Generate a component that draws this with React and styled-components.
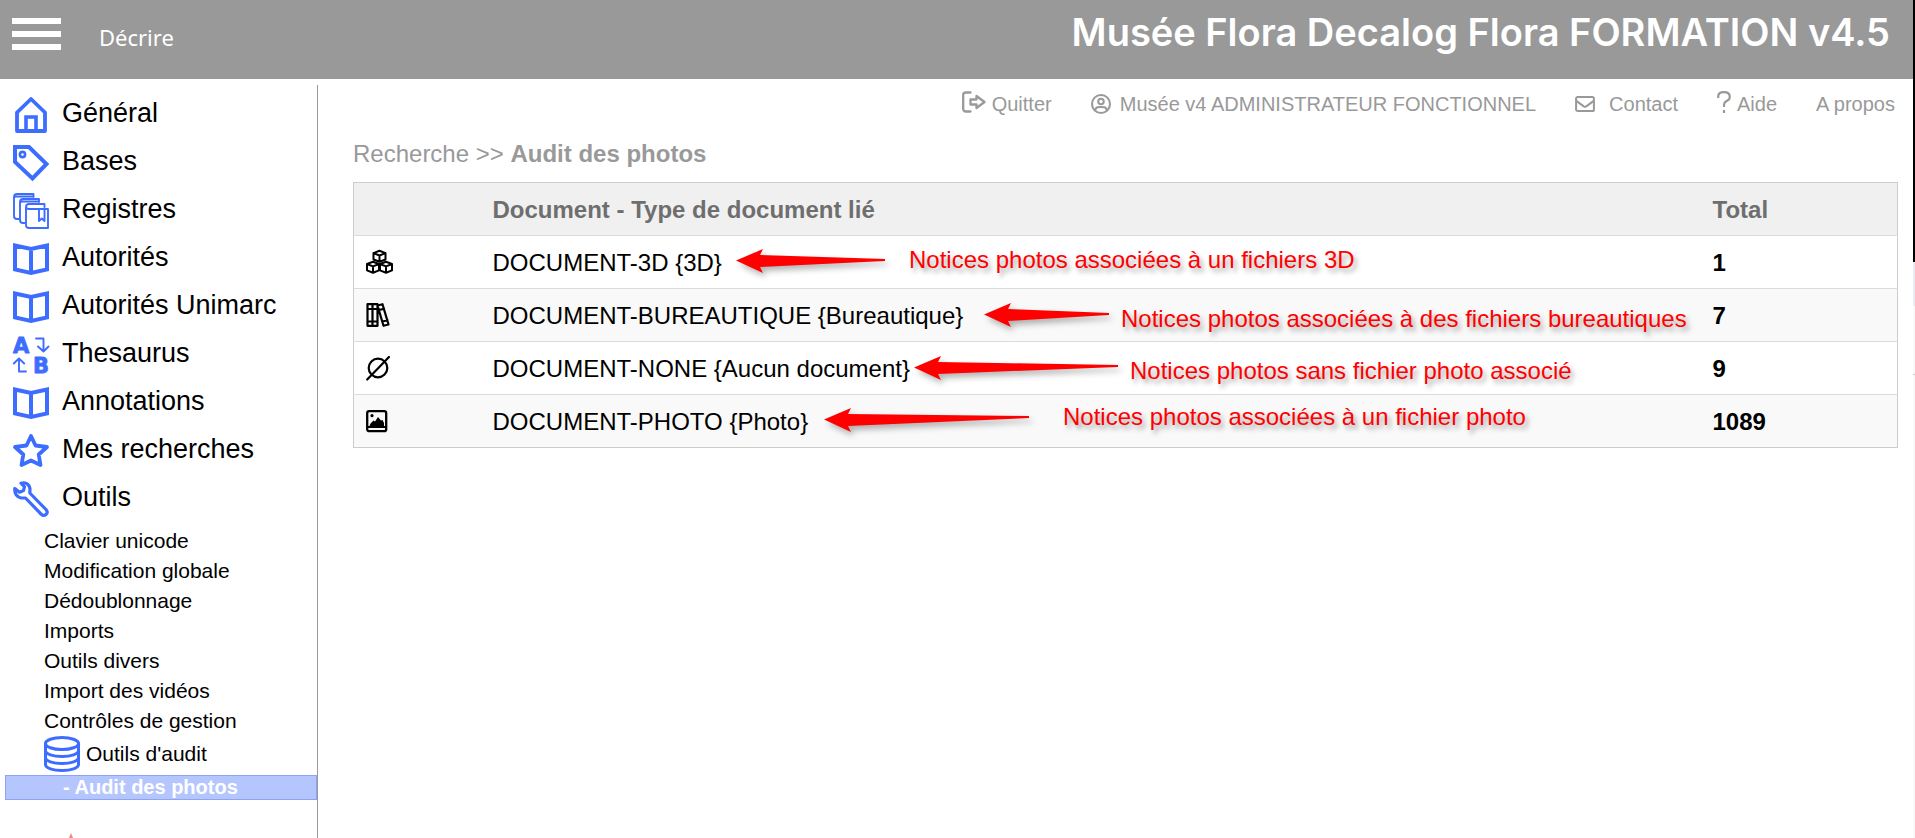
import React from "react";
import styled, { createGlobalStyle } from "styled-components";

const Global = createGlobalStyle`
  * { box-sizing: border-box; }
  body { margin: 0; background: #fff; font-family: "Liberation Sans", Arial, sans-serif; color: #000; }
  a { color: inherit; text-decoration: none; }
  ul { list-style: none; margin: 0; padding: 0; }
`;

const BLUE = "#3d6dff";

const Page = styled.div`
  display: flex;
  height: 100vh;
  overflow: hidden;
`;
const Shell = styled.div`
  flex: 1;
  min-width: 0;
  display: flex;
  flex-direction: column;
`;
const EdgeStrip = styled.div`
  width: 2px;
  display: flex;
  flex-direction: column;
  background: #f9f9f9;
`;
const EdgePart = styled.div`
  height: ${(p) => p.$h}px;
  background: ${(p) => p.$color};
`;
const Header = styled.header`
  display: flex;
  align-items: flex-start;
  height: 79px;
  padding: 0 23px 0 12px;
  background: #999;
  color: #fff;
`;
const MenuButton = styled.button`
  display: flex;
  flex-direction: column;
  gap: 7px;
  width: 49px;
  margin-top: 18px;
  padding: 0;
  border: 0;
  background: none;
`;
const MenuBar = styled.span`
  height: 6px;
  width: 100%;
  background: #fff;
`;
const Section = styled.a`
  margin: 20px 0 0 38px;
  font-family: "Noto Sans", sans-serif;
  font-size: 22px;
  line-height: 34px;
`;
const Title = styled.h1`
  margin: 0 0 0 auto;
  font-family: Inter, sans-serif;
  font-size: 38px;
  font-weight: 600;
  line-height: 64px;
`;
const Columns = styled.div`
  flex: 1;
  min-height: 0;
  display: flex;
`;
const Sidebar = styled.nav`
  width: 318px;
  flex: none;
  margin-top: 6px;
  padding: 2px 0 0 5px;
  border-right: 1px solid #999;
  overflow: hidden;
`;
const NavLink = styled.a`
  display: flex;
  align-items: center;
  gap: 13px;
  height: 48px;
  padding: 4px 0 0 8px;
  font-size: 27px;
  svg { flex: none; margin-top: 4px; }
`;
const SubList = styled.ul`
  padding: 7px 0 3px 39px;
`;
const SubLink = styled.a`
  display: flex;
  align-items: center;
  gap: 6px;
  height: ${(p) => (p.$tall ? 36 : 30)}px;
  font-size: 21px;
`;
const Current = styled.a`
  display: block;
  height: 25px;
  padding-left: 57px;
  border: 1px solid #8aa4fb;
  background: #b5c6ff;
  color: #fff;
  font-size: 20px;
  font-weight: 700;
  line-height: 23px;
`;
const Peek = styled.div`
  padding: 33px 0 0 61px;
  line-height: 0;
`;
const Main = styled.main`
  flex: 1;
  min-width: 0;
  padding: 0 15px 0 35px;
`;
const UserBar = styled.nav`
  display: flex;
  justify-content: flex-end;
  gap: 39px;
  height: 50px;
  padding-right: 3px;
  color: #999;
  font-size: 20px;
`;
const UserLink = styled.a`
  display: flex;
  align-items: center;
  gap: ${(p) => p.$gap || 6}px;
  white-space: nowrap;
  svg { margin-bottom: ${(p) => (p.$raised ? 4 : 0)}px; }
`;
const Crumbs = styled.h2`
  margin: 10px 0 14px;
  color: #999;
  font-size: 24px;
  font-weight: 400;
  line-height: 29px;
`;
const Audit = styled.div`
  position: relative;
`;
const Table = styled.table`
  width: 100%;
  border-collapse: collapse;
  table-layout: fixed;
  border: 1px solid #ccc;
  font-size: 24px;
`;
const Head = styled.th`
  width: ${(p) => p.$w || "auto"};
  height: 53px;
  padding: 2px 0 0;
  background: #f0f0f0;
  color: #6e6e6e;
  text-align: left;
`;
const Row = styled.tr`
  border-top: 1px solid #dbdbdb;
  background: ${(p) => (p.$odd ? "#f9f9f9" : "#fff")};
`;
const Cell = styled.td`
  height: 53px;
  padding: 2px 0 0;
  font-weight: ${(p) => (p.$bold ? 700 : 400)};
  white-space: nowrap;
`;
const IconCell = styled.td`
  padding: 0 0 0 12px;
  svg { display: block; }
`;
const Arrow = styled.svg`
  position: absolute;
  left: ${(p) => p.$x}px;
  top: ${(p) => p.$y}px;
  overflow: visible;
  filter: drop-shadow(3px 4px 3px rgba(0, 0, 0, 0.3));
`;
const Note = styled.span`
  position: absolute;
  left: ${(p) => p.$x}px;
  top: ${(p) => p.$y}px;
  color: #f00;
  font-size: 24px;
  line-height: 28px;
  white-space: nowrap;
  text-shadow: 3px 4px 5px rgba(0, 0, 0, 0.35);
`;

const Svg = ({ size = 36, box = 36, sw = 4, color = BLUE, children }) => (
  <svg width={size} height={size} viewBox={`0 0 ${box} ${box}`} fill="none" stroke={color} overflow="visible"
    strokeWidth={sw} strokeLinejoin="round" strokeLinecap="round" aria-hidden="true">{children}</svg>
);

const icons = {
  home: <Svg><path d="M4 15.500 18 2 32 15.500V34H4Z" strokeWidth="3.800" /><path d="M13 34V20h10v14" strokeLinejoin="miter" strokeLinecap="butt" strokeWidth="3.600" /></Svg>,
  tag: <Svg><path d="M2 2H16L33.500 19 19.500 33.500 2 17Z" strokeLinejoin="miter" /><circle cx="9.500" cy="9.500" r="2.600" strokeWidth="2.600" /></Svg>,
  registers: <Svg sw={1.900}>
    <path d="M20.500 4V1H4C2 1 1 2 1 4V23c0 2 1 3 3 3H6M1 5C1 4 2 3.500 3.500 3.500H20" />
    <path d="M26 9V6H10C8 6 7 7 7 9V27c0 2 1 3 3 3H12M7 10C7 9 8 8.500 9.500 8.500H26" />
    <path d="M31.500 14V11H16C14 11 13 12 13 14V32c0 2 1 3 3 3H35V16H16C14.500 16 13 15 13 13.500" />
    <path d="M26 16V28l2.800-2.500L31.500 28V16" />
  </Svg>,
  book: <Svg><path d="M2 4.500 18 8 34 4.500V28.500L18 32 2 28.500ZM18 8V32" strokeLinejoin="miter" /></Svg>,
  ab: <Svg sw={1.900}>
    <g fill={BLUE} strokeWidth="0.800" fontFamily="DejaVu Sans" fontWeight="700" fontSize="21"><text x="0" y="16">A</text><text x="20" y="35.500">B</text></g>
    <path d="M23 1.500H30.500V13.500M25 9.500 30.500 14.500 35.500 9.500" /><path d="M13 34.500H6V22.500M.8 26.500 6 21.500 11.200 26.500" />
  </Svg>,
  star: <Svg><path d="M18 3 22.500 12.500 34 14 25.700 21.500 27.500 32 18 27.500 8.500 32 10.300 21.500 2 14 13.500 12.500Z" strokeWidth="3.800" /></Svg>,
  wrench: <Svg><path d="M8 2.200C12 .8 16.500 3 17 8L16.800 12 33 28.500C34.600 30.500 34.200 32.500 33 33.500 31.500 34.800 29.500 34.500 28 33L12.500 17H8C4 16.500 1.300 12.500 1.800 7.500L6.500 11.200 10.500 9.500 11.500 5.800Z" strokeWidth="3.200" /></Svg>,
  db: <Svg sw={3}><ellipse cx="18" cy="7.500" rx="16.500" ry="6" /><path d="M1.500 7.500V28.500C1.500 32 9 34.500 18 34.500S34.500 32 34.500 28.500V7.500M1.500 14.500C1.500 18 9 20.500 18 20.500S34.500 18 34.500 14.500M1.500 21.500C1.500 25 9 27.500 18 27.500S34.500 25 34.500 21.500" /></Svg>,
};

const black = { size: 28, box: 28, color: "#000" };
const docIcons = {
  cubes: <Svg {...black} sw={2}>
    {[[13.5, 8.3], [7, 19.2], [20, 19.2]].map(([x, y]) => (
      <path key={x} d={`M${x} ${y - 5.5} ${x + 6} ${y - 3.2}V${y + 3.2}L${x} ${y + 5.5} ${x - 6} ${y + 3.2}V${y - 3.2}ZM${x - 6} ${y - 3.2} ${x} ${y - 0.8} ${x + 6} ${y - 3.2}M${x} ${y - 0.8}V${y + 5.5}`} />
    ))}
  </Svg>,
  books: <Svg {...black} sw={2.200}><path d="M1.500 3.200H11.500V24.800H1.500ZM6.500 3.200V24.800M1.500 8H11.500M1.500 20.500H11.500M11.500 4.500 16.500 3.200 22.500 23.500 17.500 24.800 11.500 4.500M13 9 18 7.700M16.500 20.500 21.500 19.200" /></Svg>,
  none: <Svg {...black} sw={2.200}><circle cx="12" cy="14" r="9.300" /><path d="M1.200 25.500 23 3" /></Svg>,
  photo: <Svg {...black} sw={2.300}><rect x="1.200" y="4.200" width="19" height="20" rx="2" /><path d="M2 20H20" strokeWidth="1.800" /><path d="M3.500 19 4.500 16.500 7.500 13.500 9 14.500 12 10 15 13.500 16.500 13 18 16V19Z" fill="#000" stroke="none" /><circle cx="6" cy="8.700" r="1.600" fill="#000" stroke="none" /></Svg>,
};

const gray = { size: 24, box: 24, color: "#999" };
const userLinks = [
  { label: "Quitter", icon: <Svg {...gray} sw={2.300}><path d="M8.500 2.500H4C2 2.500 1.200 3.500 1.200 5V18.500C1.200 20 2 21.500 4 21.500H8.500M8.500 9.500H14.500V6L22.500 12 14.500 18V14.500H8.500Z" /></Svg>, gap: 6, raised: true },
  { label: "Musée v4 ADMINISTRATEUR FONCTIONNEL", icon: <Svg {...gray} size={20} sw={2.500}><circle cx="12" cy="12" r="10.800" /><circle cx="12" cy="9" r="3.300" /><path d="M5 19.500C6 15.500 8.500 15.500 12 15.500S18 15.500 19 19.500" /></Svg>, gap: 9 },
  { label: "Contact", icon: <Svg {...gray} size={20} sw={2.400}><rect x="1.300" y="3.500" width="21.400" height="17" rx="2" /><path d="M2 8.500 10.500 14.800Q12 15.800 13.500 14.800L22 8.500" /></Svg>, gap: 14 },
  { label: "Aide", icon: <svg width="14" height="22" viewBox="0 0 14 22" fill="none" stroke="#999" strokeWidth="2.200" aria-hidden="true"><path d="M1.200 7V5.500C1.200 2.500 3.500 1.200 7 1.200S12.800 3 12.800 6 11 9 9 10.500 7 12.500 7 16M7 19V22" /></svg>, gap: 6, raised: true },
  { label: "A propos" },
];

const nav = [
  ["Général", "home"], ["Bases", "tag"], ["Registres", "registers"], ["Autorités", "book"],
  ["Autorités Unimarc", "book"], ["Thesaurus", "ab"], ["Annotations", "book"],
  ["Mes recherches", "star"], ["Outils", "wrench"],
];
const tools = ["Clavier unicode", "Modification globale", "Dédoublonnage", "Imports", "Outils divers", "Import des vidéos", "Contrôles de gestion"];
const rows = [
  ["cubes", "DOCUMENT-3D {3D}", "1"],
  ["books", "DOCUMENT-BUREAUTIQUE {Bureautique}", "7"],
  ["none", "DOCUMENT-NONE {Aucun document}", "9"],
  ["photo", "DOCUMENT-PHOTO {Photo}", "1089"],
];
const notes = [
  { text: "Notices photos associées à un fichiers 3D", ax: 383, ay: 64, len: 149, tail: 13, x: 556, y: 64 },
  { text: "Notices photos associées à des fichiers bureautiques", ax: 631, ay: 118, len: 125, tail: 13, x: 768, y: 123 },
  { text: "Notices photos sans fichier photo associé", ax: 561, ay: 171, len: 204, tail: 12, x: 777, y: 175 },
  { text: "Notices photos associées à un fichier photo", ax: 471, ay: 223, len: 205, tail: 11, x: 710, y: 221 },
];

export default function App() {
  return (
    <Page>
      <Global />
      <Shell>
        <Header>
          <MenuButton aria-label="Menu"><MenuBar /><MenuBar /><MenuBar /></MenuButton>
          <Section href="#decrire">Décrire</Section>
          <Title>Musée Flora Decalog Flora FORMATION v4.5</Title>
        </Header>
        <Columns>
          <Sidebar>
            <ul>
              {nav.map(([label, icon]) => (
                <li key={label}><NavLink href="#nav">{icons[icon]}{label}</NavLink></li>
              ))}
            </ul>
            <SubList>
              {tools.map((t) => <li key={t}><SubLink href="#tool">{t}</SubLink></li>)}
              <li><SubLink href="#audit" $tall>{icons.db}Outils d'audit</SubLink></li>
            </SubList>
            <Current href="#photos" aria-current="page">- Audit des photos</Current>
            <Peek><svg width="10" height="12" viewBox="0 0 10 12" aria-hidden="true"><path d="M5 0 10 12H0Z" fill="#f28b82" /></svg></Peek>
          </Sidebar>
          <Main>
            <UserBar>
              {userLinks.map((l) => (
                <UserLink key={l.label} href="#user" $gap={l.gap} $raised={l.raised}>{l.icon}{l.label}</UserLink>
              ))}
            </UserBar>
            <Crumbs>Recherche &gt;&gt; <b>Audit des photos</b></Crumbs>
            <Audit>
              <Table>
                <thead>
                  <tr><Head $w="139px" aria-label="Type" /><Head>Document - Type de document lié</Head><Head $w="185px">Total</Head></tr>
                </thead>
                <tbody>
                  {rows.map(([icon, name, total], i) => (
                    <Row key={name} $odd={i % 2 === 1}>
                      <IconCell>{docIcons[icon]}</IconCell><Cell>{name}</Cell><Cell $bold>{total}</Cell>
                    </Row>
                  ))}
                </tbody>
              </Table>
              {notes.map((n) => (
                <React.Fragment key={n.text}>
                  <Arrow $x={n.ax} $y={n.ay} width={n.len} height="28" aria-hidden="true">
                    <path d={`M0 14.500 27 3 24 9 ${n.len} ${n.tail}V${n.tail + 2}L24 21 27 27Z`} fill="#f00" />
                  </Arrow>
                  <Note $x={n.x} $y={n.y}>{n.text}</Note>
                </React.Fragment>
              ))}
            </Audit>
          </Main>
        </Columns>
      </Shell>
      <EdgeStrip>
        <EdgePart $h={262} $color="#000" />
        <EdgePart $h={44} $color="#ebebf3" />
        <EdgePart $h={68} $color="#f9f9f9" />
        <EdgePart $h={1} $color="#ccc" />
      </EdgeStrip>
    </Page>
  );
}
